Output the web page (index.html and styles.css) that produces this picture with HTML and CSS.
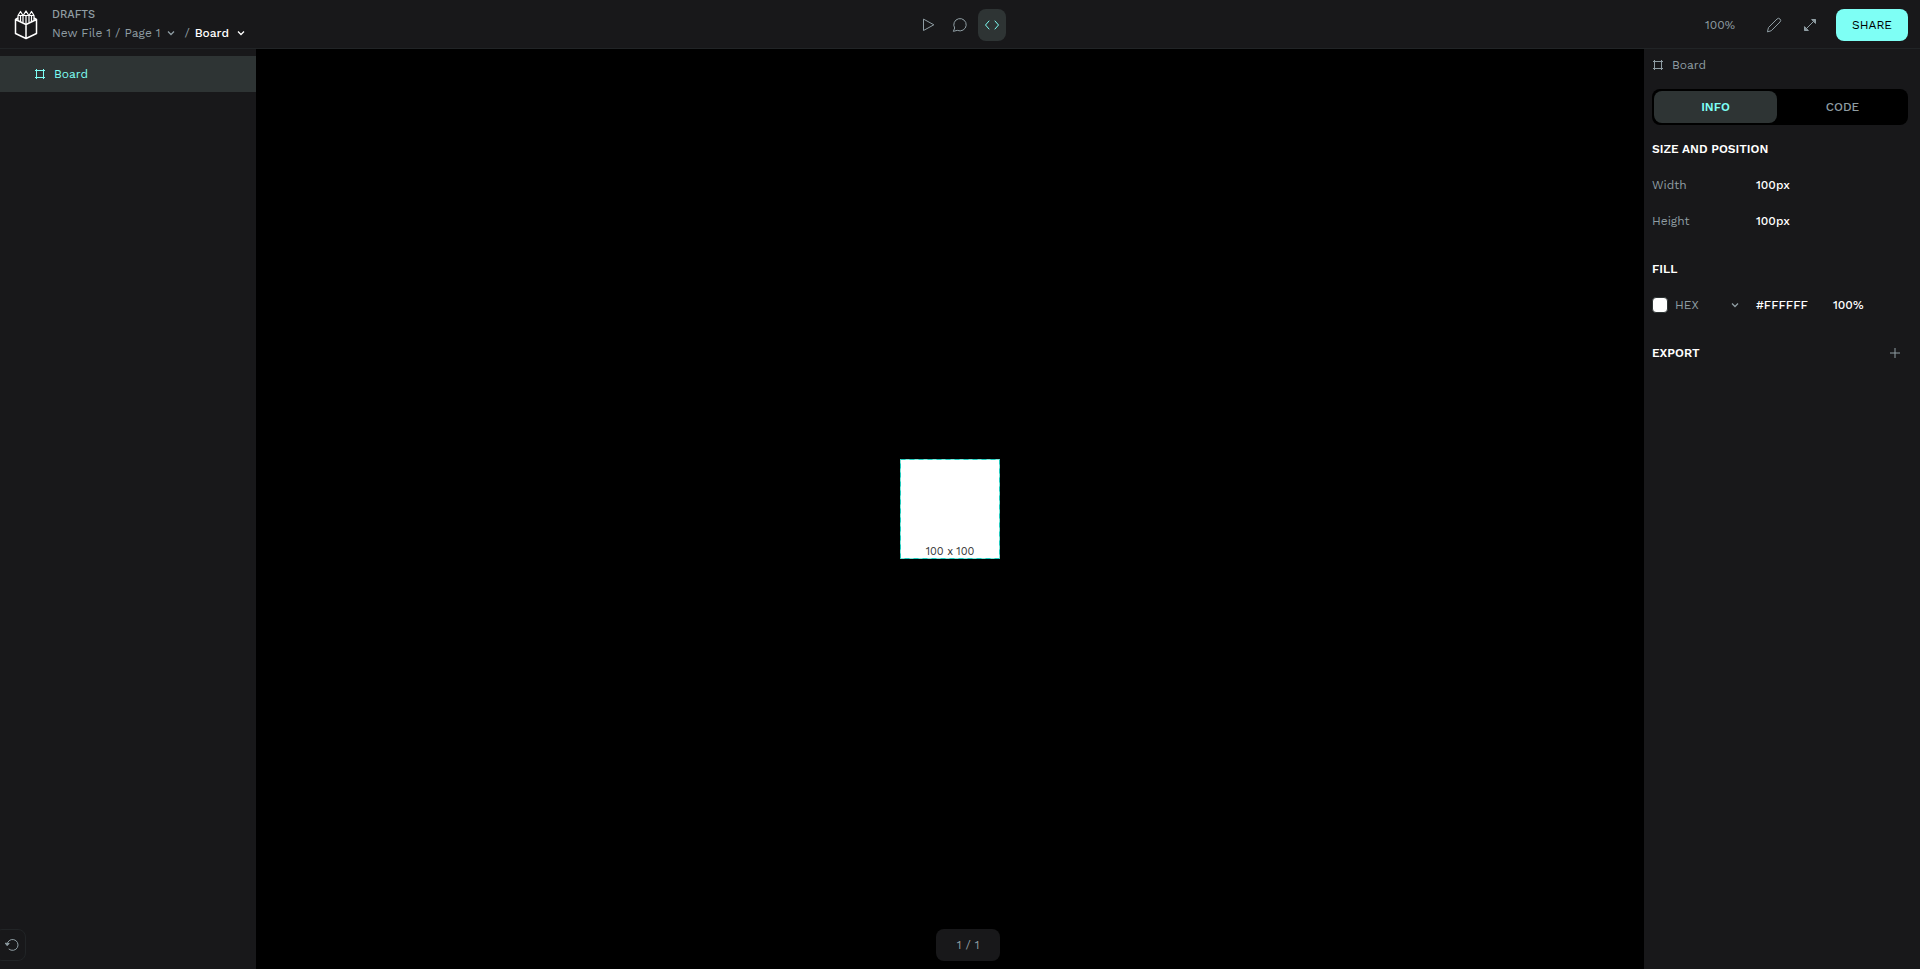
FILE: index.html
```
<!DOCTYPE html>
<html lang="en">
<head>
<meta charset="utf-8">
<title>Board - Inspect</title>
<link rel="stylesheet" href="styles.css">
</head>
<body>
<header class="topbar">
  <div class="file">
    <a class="logo" href="#" aria-label="Dashboard">
      <svg width="24" height="30" viewBox="0 0 24 30" fill="none" stroke="currentColor" stroke-width="1.5" stroke-linejoin="round">
        <path d="M1.500 9.500V23.500L12 28.500L22.500 23.500V9.500L12 14.500ZM12 14.500V28.500M1.500 9.500L4 8M22.500 9.500L20 8"/>
        <path stroke-width="1.200" d="M4 10.500V5.500L6.500 1.500L9 5.500V12.500M9.500 5L12 1L14.500 5M15 12.500V5.500L17.500 1.500L20 5.500V10.500M4 5.500H20M6.500 6V11.500M12 5V14M17.500 6V11.500"/>
      </svg>
    </a>
    <div class="crumbs">
      <span class="project">DRAFTS</span>
      <div class="path">
        <button class="crumb" type="button"><span>New File 1 / Page 1</span><svg class="chevron" viewBox="0 0 8 8"><path d="M1 2.500L4 5.500L7 2.500"/></svg></button>
        <span class="slash">/</span>
        <button class="crumb current" type="button"><span>Board</span><svg class="chevron" viewBox="0 0 8 8"><path d="M1 2.500L4 5.500L7 2.500"/></svg></button>
      </div>
    </div>
  </div>
  <nav class="modes">
    <button class="mode" type="button" aria-label="Play"><svg class="icon" viewBox="0 0 16 16"><path d="M3.500 2.500V13.500L13.500 8Z"/></svg></button>
    <button class="mode" type="button" aria-label="Comments"><svg class="icon" viewBox="0 0 16 16"><path d="M1.500 14L2.700 11A6.200 6.200 0 1 1 5.600 13.500Z"/></svg></button>
    <button class="mode active" type="button" aria-label="Inspect"><svg class="icon" viewBox="0 0 16 16"><path d="M5 4L1.500 8L5 12M11 4L14.500 8L11 12"/></svg></button>
  </nav>
  <div class="actions">
    <button class="zoom" type="button">100%</button>
    <button class="tool" type="button" aria-label="Edit"><svg class="icon" viewBox="0 0 16 16"><path d="M1.500 14.500L2.500 10.500L11 2A1.800 1.800 0 0 1 14 5L5.500 13.500Z"/></svg></button>
    <button class="tool" type="button" aria-label="Full screen"><svg class="icon" viewBox="0 0 16 16"><path d="M3 13L13 3"/><path class="solid" d="M10 2.500H13.500V6ZM2.500 10V13.500H6Z"/></svg></button>
    <button class="share" type="button">SHARE</button>
  </div>
</header>
<div class="workspace">
  <aside class="layers">
    <button class="layer" type="button"><svg class="frame" viewBox="0 0 12 12"><path d="M2.500 1V11M9.500 1V11M1 2.500H11M1 9.500H11"/></svg><span>Board</span></button>
    <div class="reset-row"><button class="reset" type="button" aria-label="Reset view"><svg class="icon" viewBox="0 0 16 16"><path d="M3 8A5.500 5.500 0 1 1 5 12.200"/><path class="solid" d="M1.500 6.500L3 8.500L5 6.800Z"/></svg></button></div>
  </aside>
  <main class="canvas">
    <div class="board">
      <span>100 x 100</span>
      <svg class="outline" viewBox="0 0 100 100"><rect x="0.500" y="0.500" width="99" height="99" stroke="#7fe3d8"/><rect x="0.500" y="0.500" width="99" height="99" stroke="#1fc9bd" stroke-dasharray="5 4"/></svg>
    </div>
    <div class="pager">1 / 1</div>
  </main>
  <aside class="inspect">
    <div class="selection"><svg class="frame" viewBox="0 0 12 12"><path d="M2.500 1V11M9.500 1V11M1 2.500H11M1 9.500H11"/></svg><span>Board</span></div>
    <div class="tabs" role="tablist">
      <button class="tab active" type="button" role="tab" aria-selected="true">INFO</button>
      <button class="tab" type="button" role="tab" aria-selected="false">CODE</button>
    </div>
    <section class="block">
      <h2 class="title">SIZE AND POSITION</h2>
      <dl class="props">
        <dt>Width</dt><dd>100px</dd>
        <dt>Height</dt><dd>100px</dd>
      </dl>
    </section>
    <section class="block">
      <h2 class="title">FILL</h2>
      <div class="fill">
        <span class="swatch"></span>
        <div class="format">
          <select class="select" aria-label="Color format"><option>HEX</option></select>
          <svg class="chevron" viewBox="0 0 8 8"><path d="M1 2.500L4 5.500L7 2.500"/></svg>
        </div>
        <span class="hex">#FFFFFF</span>
        <span>100%</span>
      </div>
    </section>
    <section class="block export">
      <h2 class="title">EXPORT</h2>
      <button class="add" type="button" aria-label="Add export"><svg class="frame" viewBox="0 0 12 12"><path d="M6 1V11M1 6H11"/></svg></button>
    </section>
  </aside>
</div>
</body>
</html>
```
FILE: styles.css
```
* { box-sizing: border-box; }
body {
  margin: 0;
  min-height: 100vh;
  display: flex;
  flex-direction: column;
  background: #000;
  color: #8f9da3;
  font: 12px/16px "Work Sans", Inter, "Liberation Sans", sans-serif;
}
button, select { font: inherit; color: inherit; background: none; border: 0; padding: 0; }
svg { display: block; flex: none; fill: none; stroke: currentColor; }
.icon { width: 16px; height: 16px; stroke-linejoin: round; stroke-linecap: round; }
.solid { fill: currentColor; }
.chevron { width: 8px; height: 8px; stroke-width: 1.3; }
.frame { width: 12px; height: 12px; }

.topbar {
  display: grid;
  grid-template-columns: 1fr auto 1fr;
  align-items: center;
  height: 49px;
  padding: 2px 12px 0;
  background: #18181a;
  border-bottom: 1px solid #212426;
}
.file { display: flex; align-items: center; gap: 14px; padding-left: 2px; }
.logo { color: #fff; }
.project { display: block; font-size: 11px; line-height: 16px; font-weight: 500; }
.crumbs { padding-bottom: 1px; }
.path { display: flex; align-items: center; height: 20px; }
.crumb { display: flex; align-items: center; gap: 7px; }
.slash { margin: 0 5px 0 9px; }
.current { color: #fff; font-weight: 500; gap: 8px; }
.modes { display: flex; gap: 4px; }
.mode { display: grid; place-items: center; width: 28px; height: 32px; border-radius: 8px; }
.mode.active { background: #2e3434; color: #7efff5; }
.actions { display: flex; align-items: center; justify-content: flex-end; }
.zoom { margin-right: 21px; }
.tool { display: grid; place-items: center; width: 36px; height: 32px; }
.share { width: 72px; height: 32px; margin-left: 8px; border-radius: 8px; background: #7efff5; color: #000; }

.workspace { flex: 1; display: grid; grid-template-columns: 256px 1fr 276px; }
.layers { display: flex; flex-direction: column; padding: 7px 0 8px; background: #18181a; }
.layer {
  display: flex;
  align-items: center;
  gap: 8px;
  height: 36px;
  padding-left: 34px;
  background: #2e3434;
  color: #7efff5;
}
.reset-row { display: flex; margin-top: auto; overflow: hidden; }
.reset {
  display: grid;
  place-items: center;
  width: 32px;
  height: 32px;
  margin-left: -6px;
  padding-left: 4px;
  border: 1px solid #212426;
  border-radius: 8px;
}
.canvas { display: grid; position: relative; place-items: center; }
.board {
  position: relative;
  display: flex;
  align-items: flex-end;
  justify-content: center;
  width: 100px;
  height: 100px;
  padding-bottom: 1px;
  background: #fff;
  color: #333;
  font-size: 11px;
  line-height: 13px;
}
.outline { position: absolute; inset: 0; width: 100%; height: 100%; }
.pager {
  position: absolute;
  bottom: 8px;
  left: 49%;
  width: 64px;
  border-radius: 8px;
  background: #18181a;
  line-height: 32px;
  text-align: center;
}

.inspect { padding: 8px 12px 8px 8px; background: #18181a; }
.selection { display: flex; align-items: center; gap: 8px; height: 16px; }
.tabs {
  display: grid;
  grid-template-columns: 123px 1fr;
  gap: 2px;
  margin-top: 16px;
  padding: 2px;
  border-radius: 8px;
  background: #000;
}
.tab { height: 32px; border-radius: 8px; font-weight: 500; }
.tab.active { background: #2e3434; color: #7efff5; font-weight: 600; }
.block { margin-top: 12px; }
.title { margin: 0; color: #fff; font-size: 12px; line-height: 24px; font-weight: 600; }
.props {
  display: grid;
  grid-template-columns: 104px 1fr;
  margin: 6px 0 0;
  line-height: 36px;
}
.props dd { margin: 0; color: #fff; font-weight: 500; }
.block + .block { margin-top: 18px; }
.fill {
  display: grid;
  grid-template-columns: 23px 81px 77px 1fr;
  align-items: center;
  height: 36px;
  margin-top: 6px;
  color: #fff;
  font-weight: 500;
}
.swatch { width: 16px; height: 16px; border: 1px solid #2e3434; border-radius: 4px; background: #fff; }
.format { display: flex; align-items: center; color: #8f9da3; font-weight: 400; }
.select { appearance: none; width: 56px; }
.export { display: flex; justify-content: space-between; }
.add { display: grid; place-items: center; width: 26px; }
```
